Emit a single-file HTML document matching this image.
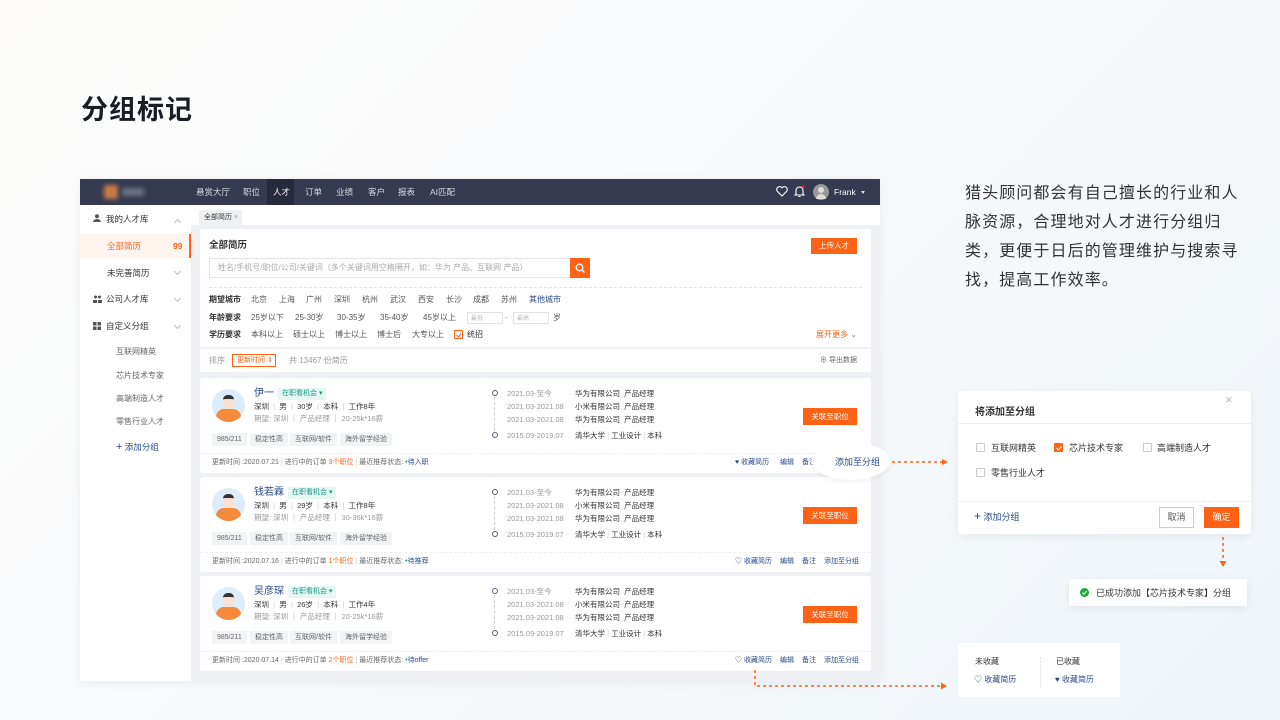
<!DOCTYPE html><html><head><meta charset="utf-8"><style>
*{margin:0;padding:0;box-sizing:border-box}
body{width:1280px;height:720px;overflow:hidden;position:relative;font-family:"Liberation Sans","Noto Sans CJK SC",sans-serif;background:linear-gradient(135deg,#fdfcfb 0%,#f7f9fb 50%,#eef5f9 100%);color:#333}
.a{position:absolute;white-space:nowrap}
.s{font-size:8px;line-height:10px}
.g{color:#999}.b{color:#2b4a8a}.o{color:#ff6214}
.nav span{position:absolute;top:0;line-height:26px;font-size:8.5px;color:#d8dae2}
.side div{position:absolute;font-size:8.5px;line-height:12px}
.chev{position:absolute;width:5px;height:5px;border-right:1px solid #bbb;border-bottom:1px solid #bbb;transform:rotate(45deg)}
.card{position:absolute;left:200px;width:671px;height:95px;background:#fff;border-radius:3px}
.card .a{font-size:7.5px;line-height:10px}
.tag{position:absolute;top:55px;height:13px;line-height:13px;background:#f2f3f5;color:#666;font-size:7px;padding:0 5px}
.cb{position:absolute;width:9px;height:9px;border:1px solid #ccc;border-radius:1px;background:#fff}
</style></head><body>
<div class="a" style="left:81px;top:88px;font-size:27px;font-weight:bold;color:#1a1d26;letter-spacing:1px">分组标记</div>

<div class="a" style="left:80px;top:179px;width:800px;height:502px;background:#eef0f4;box-shadow:0 2px 10px rgba(0,0,0,.06)"></div>
<div class="a nav" style="left:80px;top:179px;width:800px;height:26px;background:#353a50">
<div class="a" style="left:24px;top:6px;width:14px;height:14px;background:#c87a45;border-radius:2px;filter:blur(2px)"></div>
<div class="a" style="left:42px;top:9px;width:22px;height:8px;background:#6a6f80;filter:blur(2px)"></div>
<span style="left:116px">悬赏大厅</span><span style="left:163px">职位</span>
<div class="a" style="left:187px;top:0;width:27px;height:26px;background:#262a3b"></div>
<span style="left:193px;color:#fff">人才</span><span style="left:225px">订单</span><span style="left:256px">业绩</span><span style="left:288px">客户</span><span style="left:318px">报表</span><span style="left:350px">AI匹配</span>
<svg class="a" style="left:696px;top:7px" width="12" height="11" viewBox="0 0 12 11"><path d="M6 10L1.3 5.3A2.7 2.7 0 0 1 6 1.8A2.7 2.7 0 0 1 10.7 5.3Z" fill="none" stroke="#fff" stroke-width="1.1"/></svg>
<svg class="a" style="left:714px;top:6px" width="11" height="13" viewBox="0 0 11 13"><path d="M2 9V5.5a3.5 3.5 0 0 1 7 0V9l1 1H1z M4.5 11.5h2" fill="none" stroke="#fff" stroke-width="1.1"/><circle cx="9" cy="2" r="1.3" fill="#f33"/></svg>
<div class="a" style="left:733px;top:5px;width:16px;height:16px;border-radius:50%;background:#999"><div class="a" style="left:5px;top:3px;width:6px;height:6px;border-radius:50%;background:#ddd"></div><div class="a" style="left:3px;top:10px;width:10px;height:5px;border-radius:5px 5px 0 0;background:#ddd"></div></div>
<span style="left:754px;color:#fff">Frank</span>
<div class="a" style="left:781px;top:12px;border:2.5px solid transparent;border-top:3px solid #ddd"></div>
</div>
<div class="a side" style="left:80px;top:205px;width:111px;height:476px;background:#fff">
<svg class="a" style="left:13px;top:9px" width="8" height="8"><circle cx="4" cy="2.3" r="2" fill="#555"/><path d="M0 8a4 3 0 0 1 8 0z" fill="#555"/></svg>
<div style="left:26px;top:8px">我的人才库</div><i class="chev" style="left:95px;top:15px;transform:rotate(225deg)"></i>
<div style="left:0;top:29px;width:111px;height:24px;background:#fff4ee;border-right:2px solid #ff6214"></div>
<div style="left:27px;top:35px;color:#ff6214">全部简历</div><div style="left:93px;top:35px;color:#ff6214;font-weight:bold">99</div>
<div style="left:27px;top:62px">未完善简历</div><i class="chev" style="left:95px;top:64px"></i>
<svg class="a" style="left:13px;top:90px" width="9" height="8"><circle cx="2.5" cy="2" r="1.5" fill="#555"/><circle cx="6.5" cy="2" r="1.5" fill="#555"/><rect x="0" y="5" width="4" height="3" fill="#555"/><rect x="5" y="5" width="4" height="3" fill="#555"/></svg>
<div style="left:26px;top:88px">公司人才库</div><i class="chev" style="left:95px;top:91px"></i>
<svg class="a" style="left:13px;top:117px" width="8" height="8"><rect width="3.5" height="3.5" fill="#555"/><rect x="4.5" width="3.5" height="3.5" fill="#555"/><rect y="4.5" width="3.5" height="3.5" fill="#555"/><rect x="4.5" y="4.5" width="3.5" height="3.5" fill="#555"/></svg>
<div style="left:26px;top:115px">自定义分组</div><i class="chev" style="left:95px;top:118px"></i>
<div style="left:36px;top:141px;color:#666;font-size:8px">互联网精英</div>
<div style="left:36px;top:165px;color:#666;font-size:8px">芯片技术专家</div>
<div style="left:36px;top:188px;color:#666;font-size:8px">高端制造人才</div>
<div style="left:36px;top:211px;color:#666;font-size:8px">零售行业人才</div>
<div style="left:36px;top:236px;color:#2b4a8a;font-size:8.5px"><span style="font-size:11px">+</span> 添加分组</div>
</div>
<div class="a" style="left:191px;top:205px;width:689px;height:20px;background:#fff"></div>
<div class="a s" style="left:199px;top:210px;width:43px;height:15px;background:#eef0f4;padding:3px 5px;font-size:7px">全部简历 <span class="g">×</span></div>

<div class="a" style="left:200px;top:229px;width:671px;height:118px;background:#fff;border-radius:2px"></div>
<div class="a" style="left:209px;top:237px;font-size:9.5px;font-weight:bold">全部简历</div>
<div class="a" style="left:811px;top:238px;width:46px;height:16px;background:#ff6214;color:#fff;font-size:7.5px;line-height:16px;text-align:center">上传人才</div>
<div class="a s" style="left:209px;top:258px;width:362px;height:20px;border:1px solid #e3e3e3;color:#aaa;padding:4px 8px">姓名/手机号/职位/公司/关键词（多个关键词用空格隔开，如：华为 产品、互联网 产品）</div>
<div class="a" style="left:570px;top:258px;width:20px;height:20px;background:#ff6214"><svg width="20" height="20"><circle cx="9.5" cy="9.5" r="3.3" fill="none" stroke="#fff" stroke-width="1.3"/><path d="M12 12l2.5 2.5" stroke="#fff" stroke-width="1.3"/></svg></div>
<div class="a" style="left:209px;top:287px;width:653px;border-top:1px dashed #e6e6e6"></div>
<div class="a s" style="left:209px;top:295px;font-weight:bold">期望城市</div>
<div class="a s" style="left:251px;top:295px;color:#555">北京</div><div class="a s" style="left:279px;top:295px;color:#555">上海</div><div class="a s" style="left:306px;top:295px;color:#555">广州</div><div class="a s" style="left:334px;top:295px;color:#555">深圳</div><div class="a s" style="left:362px;top:295px;color:#555">杭州</div><div class="a s" style="left:390px;top:295px;color:#555">武汉</div><div class="a s" style="left:418px;top:295px;color:#555">西安</div><div class="a s" style="left:446px;top:295px;color:#555">长沙</div><div class="a s" style="left:473px;top:295px;color:#555">成都</div><div class="a s" style="left:501px;top:295px;color:#555">苏州</div><div class="a s b" style="left:529px;top:295px">其他城市</div>
<div class="a s" style="left:209px;top:313px;font-weight:bold">年龄要求</div>
<div class="a s" style="left:251px;top:313px;color:#555">25岁以下</div><div class="a s" style="left:295px;top:313px;color:#555">25-30岁</div><div class="a s" style="left:337px;top:313px;color:#555">30-35岁</div><div class="a s" style="left:380px;top:313px;color:#555">35-40岁</div><div class="a s" style="left:423px;top:313px;color:#555">45岁以上</div>
<div class="a s" style="left:467px;top:312px;width:36px;height:12px;border:1px solid #e3e3e3;color:#bbb;font-size:6px;padding:1px 3px">最低</div>
<div class="a s g" style="left:505px;top:313px">-</div>
<div class="a s" style="left:513px;top:312px;width:36px;height:12px;border:1px solid #e3e3e3;color:#bbb;font-size:6px;padding:1px 3px">最高</div>
<div class="a s" style="left:553px;top:313px;color:#555">岁</div>
<div class="a s" style="left:209px;top:330px;font-weight:bold">学历要求</div>
<div class="a s" style="left:251px;top:330px;color:#555">本科以上</div><div class="a s" style="left:293px;top:330px;color:#555">硕士以上</div><div class="a s" style="left:335px;top:330px;color:#555">博士以上</div><div class="a s" style="left:377px;top:330px;color:#555">博士后</div><div class="a s" style="left:412px;top:330px;color:#555">大专以上</div>
<div class="cb" style="left:454px;top:330px;border-color:#ff6214"><svg class="a" style="left:0;top:0" width="8" height="8"><path d="M1.5 4l2 2 3-4" fill="none" stroke="#ff6214" stroke-width="1"/></svg></div>
<div class="a s" style="left:467px;top:330px">统招</div>
<div class="a s o" style="left:816px;top:330px">展开更多 ⌄</div>

<div class="a" style="left:200px;top:349px;width:671px;height:23px;background:#fff"></div>
<div class="a s g" style="left:209px;top:356px">排序</div>
<div class="a s o" style="left:232px;top:354px;width:44px;height:13px;border:1px solid #ff6214;padding:1px 4px;font-size:7px">更新时间 ⇕</div>
<div class="a s g" style="left:289px;top:356px">共 13467 份简历</div>
<div class="a s" style="left:820px;top:356px;color:#666;font-size:7px">⊕ 导出数据</div>

<div class="card" style="top:378px" id="c1"></div>
<div class="card" style="top:477px" id="c2"></div>
<div class="card" style="top:576px" id="c3"></div>
<script>
var d=[["伊一","30岁","工作8年","20-25k*16薪","2020.07.21","3个职位","待入职"],["钱若霖","29岁","工作8年","30-36k*16薪","2020.07.16","1个职位","待推荐"],["吴彦琛","26岁","工作4年","20-25k*16薪","2020.07.14","2个职位","待offer"]];
d.forEach(function(x,i){var h='<div class="a" style="left:12px;top:11px;width:33px;height:33px;border-radius:50%;background:#dcecfb;overflow:hidden"><div class="a" style="left:11px;top:6px;width:11px;height:14px;border-radius:5px 5px 6px 6px;background:#fbe1d3;border-top:4px solid #333"></div><div class="a" style="left:4px;top:20px;width:25px;height:14px;border-radius:8px 8px 0 0;background:#f58a3a"></div></div>'+
'<div class="a b" style="left:54px;top:10px;font-size:10px;line-height:12px">'+x[0]+'</div>'+
'<div class="a" style="left:'+(54+x[0].length*10+4)+'px;top:10px;background:#e5f6f3;color:#1a9a85;font-size:7px;padding:1px 4px">在职看机会 ▾</div>'+
'<div class="a" style="left:54px;top:24px">深圳 <span style="color:#ccc">&nbsp;|&nbsp;</span> 男 <span style="color:#ccc">&nbsp;|&nbsp;</span> '+x[1]+' <span style="color:#ccc">&nbsp;|&nbsp;</span> 本科 <span style="color:#ccc">&nbsp;|&nbsp;</span> '+x[2]+'</div>'+
'<div class="a g" style="left:54px;top:36px">期望: 深圳 ｜ 产品经理 ｜ '+x[3]+'</div>'+
'<div class="tag" style="left:12px">985/211</div><div class="tag" style="left:50px">稳定性高</div><div class="tag" style="left:90px">互联网/软件</div><div class="tag" style="left:140px">海外留学经验</div>'+
'<div class="a" style="left:0;top:75px;width:671px;border-top:1px dashed #eee"></div>'+
'<div class="a" style="left:12px;top:80px;color:#666;font-size:7px">更新时间 :'+x[4]+' <span style="color:#ccc">|</span> 进行中的订单 <span class="o">'+x[5]+'</span> <span style="color:#ccc">|</span> 最近推荐状态: <span style="color:#1a9a55">•</span><span class="b">'+x[6]+'</span></div>'+
'<div class="a" style="left:292px;top:12px;width:6px;height:6px;border-radius:50%;border:1.5px solid #555c70;background:#fff"></div><div class="a" style="left:294px;top:19px;height:34px;border-left:1px dashed #ccc"></div><div class="a" style="left:292px;top:54px;width:6px;height:6px;border-radius:50%;border:1.5px solid #555c70;background:#fff"></div>';
var r=[["2021.03-至今","华为有限公司  产品经理"],["2021.03-2021.08","小米有限公司  产品经理"],["2021.03-2021.08","华为有限公司  产品经理"]];
r.forEach(function(y,j){h+='<div class="a g" style="left:307px;top:'+(11+j*13)+'px">'+y[0]+'</div><div class="a" style="left:375px;top:'+(11+j*13)+'px">'+y[1].replace("  ","&nbsp;&nbsp;")+'</div>'});
h+='<div class="a g" style="left:307px;top:53px">2015.09-2019.07</div><div class="a" style="left:375px;top:53px">清华大学 <span style="color:#ccc">|</span> 工业设计 <span style="color:#ccc">|</span> 本科</div>'+
'<div class="a" style="left:603px;top:30px;width:54px;height:17px;background:#ff6214;color:#fff;line-height:17px;text-align:center;font-size:7.5px">关联至职位</div>'+
'<div class="a b" style="left:535px;top:80px;font-size:7px">'+(i==0?'<span style="color:#2b4a8a">♥</span>':'♡')+' 收藏简历</div><div class="a b" style="left:580px;top:80px;font-size:7px">编辑</div><div class="a b" style="left:602px;top:80px;font-size:7px">备注</div>'+(i>0?'<div class="a b" style="left:624px;top:80px;font-size:7px">添加至分组</div>':'');
document.getElementById('c'+(i+1)).innerHTML=h;});
</script>
<div class="a" style="left:812px;top:442px;width:78px;height:38px;border-radius:50%;background:#fff;box-shadow:0 2px 6px rgba(0,0,0,.06)"></div>
<div class="a b" style="left:835px;top:455px;font-size:9px">添加至分组</div>
<svg class="a" style="left:890px;top:456px" width="60" height="12"><path d="M2 6H52" stroke="#ff6214" stroke-width="1.5" stroke-dasharray="3 3"/><path d="M52 3l6 3-6 3z" fill="#ff6214"/></svg>

<div class="a" style="left:965px;top:179px;font-size:16px;line-height:29px;color:#333;letter-spacing:1.1px;white-space:normal;width:300px">猎头顾问都会有自己擅长的行业和人<br>脉资源，合理地对人才进行分组归<br>类，更便于日后的管理维护与搜索寻<br>找，提高工作效率。</div>

<div class="a" style="left:958px;top:391px;width:293px;height:143px;background:#fff;border-radius:3px;box-shadow:0 2px 10px rgba(0,0,0,.06)"></div>
<div class="a" style="left:975px;top:403px;font-size:10px;font-weight:bold">将添加至分组</div>
<div class="a" style="left:1225px;top:392px;font-size:13px;color:#bbb">×</div>
<div class="a" style="left:958px;top:423px;width:293px;border-top:1px solid #eee"></div>
<div class="cb" style="left:976px;top:443px"></div><div class="a" style="left:991px;top:441px;font-size:9px">互联网精英</div>
<div class="cb" style="left:1054px;top:443px;background:#ff6214;border-color:#ff6214"><svg class="a" style="left:0;top:0" width="8" height="8"><path d="M1.5 4l2 2 3-4" fill="none" stroke="#fff" stroke-width="1"/></svg></div><div class="a" style="left:1069px;top:441px;font-size:9px">芯片技术专家</div>
<div class="cb" style="left:1143px;top:443px"></div><div class="a" style="left:1157px;top:441px;font-size:9px">高端制造人才</div>
<div class="cb" style="left:976px;top:468px"></div><div class="a" style="left:991px;top:466px;font-size:9px">零售行业人才</div>
<div class="a" style="left:958px;top:501px;width:293px;border-top:1px solid #eee"></div>
<div class="a b" style="left:974px;top:510px;font-size:9px"><span style="font-size:12px;line-height:10px">+</span> 添加分组</div>
<div class="a" style="left:1159px;top:507px;width:35px;height:21px;border:1px solid #ccc;font-size:9px;line-height:19px;text-align:center;color:#555">取消</div>
<div class="a" style="left:1204px;top:507px;width:35px;height:21px;background:#ff6214;font-size:9px;line-height:21px;text-align:center;color:#fff">确定</div>
<svg class="a" style="left:1218px;top:535px" width="10" height="34"><path d="M5 2V26" stroke="#ff6214" stroke-width="1.5" stroke-dasharray="3 3"/><path d="M1.5 26h7L5 32z" fill="#ff6214"/></svg>
<div class="a" style="left:1069px;top:579px;width:178px;height:27px;background:#fff;box-shadow:0 2px 8px rgba(0,0,0,.08)"></div>
<svg class="a" style="left:1080px;top:588px" width="9" height="9"><circle cx="4.5" cy="4.5" r="4.5" fill="#1aad3a"/><path d="M2.3 4.6l1.5 1.5 3-3" fill="none" stroke="#fff" stroke-width="1.1"/></svg>
<div class="a" style="left:1096px;top:586px;font-size:9px;color:#333">已成功添加【芯片技术专家】分组</div>
<div class="a" style="left:958px;top:643px;width:162px;height:54px;background:#fff"></div>
<div class="a" style="left:975px;top:656px;font-size:8px">未收藏</div>
<div class="a b" style="left:974px;top:674px;font-size:8px">♡ 收藏简历</div>
<div class="a" style="left:1040px;top:657px;height:30px;border-left:1px dotted #ddd"></div>
<div class="a" style="left:1056px;top:656px;font-size:8px">已收藏</div>
<div class="a b" style="left:1055px;top:674px;font-size:8px">♥ 收藏简历</div>
<svg class="a" style="left:750px;top:668px" width="200" height="24"><path d="M5 2V18H190" fill="none" stroke="#ff6214" stroke-width="1.5" stroke-dasharray="3 3"/><path d="M191 14.5l6 3.5-6 3.5z" fill="#ff6214"/></svg>
</body></html>
